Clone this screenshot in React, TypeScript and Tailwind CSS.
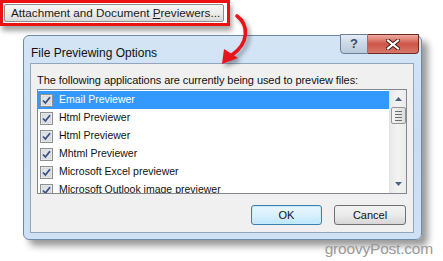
import React from 'react';

const previewers = [
  'Email Previewer',
  'Html Previewer',
  'Html Previewer',
  'Mhtml Previewer',
  'Microsoft Excel previewer',
  'Microsoft Outlook image previewer',
];

function CheckBox() {
  return (
    <svg width="13" height="13" viewBox="0 0 13 13" className="shrink-0">
      <rect x="0.5" y="0.5" width="12" height="12" fill="#f4f4f4" stroke="#8e8f8f" />
      <rect x="2" y="2" width="9" height="9" fill="#dfe2e6" stroke="#c4c9d1" strokeWidth="0.6" />
      <path d="M3 6.5 L5.4 9 L10 3.2" fill="none" stroke="#3b4f80" strokeWidth="1.8" />
    </svg>
  );
}

export default function App() {
  return (
    <div className="relative w-[443px] h-[261px] bg-white overflow-hidden" style={{ fontFamily: "'Liberation Sans', Arial, sans-serif" }}>
      {/* highlighted menu button */}
      <div className="w-[230px] h-[26px] border-[3px] border-[#ee1111] p-[1px] pr-[3px] shadow-[2px_5px_5px_rgba(0,0,0,0.35)]">
        <div className="h-full flex items-center pl-[6px] border border-[#8d8d8d] rounded-[2px] bg-gradient-to-b from-[#f6f6f6] via-[#ececec] to-[#dadada] text-[11.7px] text-[#1a1a1a] whitespace-nowrap">
          <span>
            Attachment and Document <span className="underline">P</span>reviewers...
          </span>
        </div>
      </div>

      {/* red arrow */}
      <svg className="absolute left-[212px] top-[10px] drop-shadow-[3px_3px_2px_rgba(0,0,0,0.35)]" width="44" height="60" viewBox="212 10 44 60">
        <path d="M237 16 C249 25, 249 43, 232 55" fill="none" stroke="#e8141b" strokeWidth="3.6" strokeLinecap="round" />
        <polygon points="222,64 224,49 238,58" fill="#e8141b" />
      </svg>

      {/* dialog */}
      <div className="ml-[23px] mt-[9px] w-[399px] h-[205px] rounded-[6px] border border-[#6f8aa8] bg-gradient-to-b from-[#d4e5f6] via-[#c9ddf2] to-[#cfe1f4] shadow-[6px_6px_7px_rgba(0,0,0,0.4)] flex flex-col">
        <div className="h-[27px] flex items-start pl-[7px]">
          <span className="mt-[8px] text-[12px] text-[#111]">File Previewing Options</span>
          <div className="ml-auto mr-[2px] mt-[-2px] flex">
            <div className="w-[28px] h-[20px] border border-[#6c7f96] rounded-bl-[4px] bg-gradient-to-b from-[#e4ecf5] via-[#cad7e6] to-[#b9c9dc] flex items-center justify-center text-[13px] font-bold text-[#3c4c62]">
              ?
            </div>
            <div className="w-[51px] h-[20px] border border-l-0 border-[#6b2a24] rounded-br-[4px] bg-gradient-to-b from-[#eeaaa0] via-[#cc5548] to-[#d8786b] flex items-center justify-center">
              <svg width="14" height="11" viewBox="0 0 14 11">
                <path d="M2 1.5 L12 9.5 M12 1.5 L2 9.5" stroke="#3a1410" strokeWidth="4" strokeLinecap="square" />
                <path d="M2 1.5 L12 9.5 M12 1.5 L2 9.5" stroke="#ffffff" strokeWidth="2.2" strokeLinecap="square" />
              </svg>
            </div>
          </div>
        </div>
        <div className="mx-[6px] w-[384px] h-[170px] bg-[#f0f0f0] border border-[#90a6bd] flex flex-col pl-[6px] pr-[6px]">
          <div className="mt-[9px] text-[11px] text-[#111] leading-[14px] tracking-[-0.07px] whitespace-nowrap">
            The following applications are currently being used to preview files:
          </div>
          <div className="mt-[2px] h-[105px] border border-[#828790] bg-white flex overflow-hidden">
            <div className="flex-1 pt-[1px] overflow-hidden">
              {previewers.map((name, i) => (
                <div
                  key={i}
                  className={`h-[18px] flex items-center pl-[2px] gap-[6px] text-[10.5px] whitespace-nowrap ${i === 0 ? 'bg-[#3399ff] text-white' : 'text-[#111]'}`}
                >
                  <CheckBox />
                  <span>{name}</span>
                </div>
              ))}
            </div>
            <div className="w-[17px] bg-gradient-to-r from-[#e9e9e9] via-[#f3f3f3] to-[#ebebeb] border-l border-[#e2e2e2] flex flex-col items-center">
              <svg width="7" height="4" viewBox="0 0 7 4" className="mt-[7px]">
                <polygon points="3.5,0 7,4 0,4" fill="#4d6185" />
              </svg>
              <div className="mt-[6px] w-[15px] h-[17px] border border-[#959595] rounded-[2px] bg-gradient-to-r from-[#f4f4f4] to-[#dcdcdc] flex flex-col items-center justify-center gap-[2px]">
                <div className="w-[7px] h-px bg-[#6f6f6f]" />
                <div className="w-[7px] h-px bg-[#6f6f6f]" />
                <div className="w-[7px] h-px bg-[#6f6f6f]" />
                <div className="w-[7px] h-px bg-[#6f6f6f]" />
              </div>
              <svg width="7" height="4" viewBox="0 0 7 4" className="mt-auto mb-[7px]">
                <polygon points="0,0 7,0 3.5,4" fill="#4d6185" />
              </svg>
            </div>
          </div>
          <div className="mt-[11px] flex justify-end gap-[12px] pr-px">
            <button className="w-[71px] h-[20px] border border-[#3c7fb1] rounded-[3px] bg-gradient-to-b from-[#eaf6fd] via-[#d9f0fc] to-[#bee6fd] shadow-[inset_0_0_0_1px_#c6ecfb] text-[11px] text-[#111]">
              OK
            </button>
            <button className="w-[72px] h-[20px] border border-[#707070] rounded-[3px] bg-gradient-to-b from-[#f2f2f2] via-[#ebebeb] to-[#d6d6d6] text-[11px] text-[#111]">
              Cancel
            </button>
          </div>
        </div>
      </div>

      {/* watermark */}
      <div className="absolute right-[10px] bottom-[1px] text-[15.5px] text-[#9a9a9a] tracking-[-0.2px]">groovyPost.com</div>
    </div>
  );
}
